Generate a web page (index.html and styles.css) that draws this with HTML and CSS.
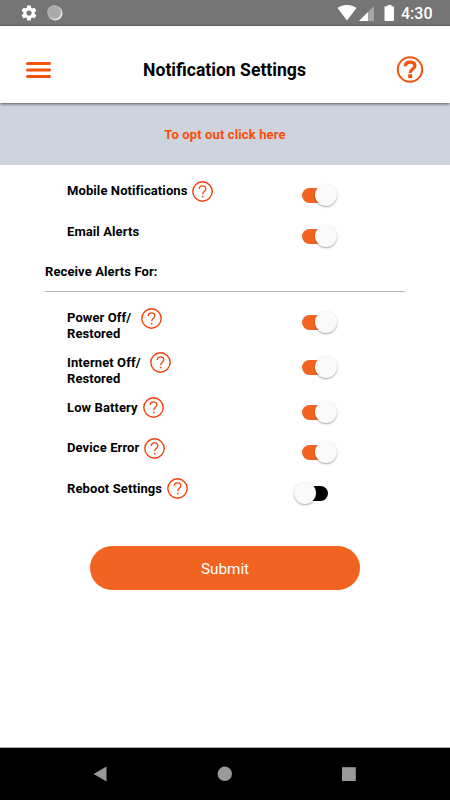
FILE: index.html
```html
<!DOCTYPE html>
<html lang="en">
<head>
    <meta charset="UTF-8">
    <meta name="viewport" content="width=device-width, initial-scale=1.0">
    <title>Notification Settings</title>
    <link rel="stylesheet" href="styles.css">
</head>
<body>
    <!-- Help icon shared by the setting rows -->
    <svg width="0" height="0" class="defs">
        <symbol id="help" viewBox="0 0 21 21">
            <circle cx="10.5" cy="10.5" r="9.7" fill="none" stroke="#f4410b" stroke-width="1.4"/>
            <path d="M7.2 8.1C7.2 6 8.600 4.900 10.500 4.900S13.800 6.100 13.800 7.900C13.800 10.100 10.700 10.400 10.700 13.200" fill="none" stroke="#f4410b" stroke-width="1.3"/>
            <rect x="9.9" y="14.8" width="1.6" height="1.500" fill="#f4410b"/>
        </symbol>
    </svg>

    <div class="screen">
        <div class="status-bar">
            <svg width="18" height="18" viewBox="0 0 24 24"><path fill="#fff" d="M19.43 12.98c.04-.32.07-.64.07-.98s-.03-.66-.07-.98l2.11-1.65c.19-.15.24-.42.12-.64l-2-3.46c-.12-.22-.39-.3-.61-.22l-2.49 1c-.52-.4-1.08-.73-1.69-.98l-.38-2.65C14.46 2.18 14.25 2 14 2h-4c-.25 0-.46.18-.49.42l-.38 2.65c-.61.25-1.17.59-1.69.98l-2.49-1c-.23-.09-.49 0-.61.22l-2 3.46c-.13.22-.07.49.12.64l2.11 1.65c-.04.32-.07.65-.07.98s.03.66.07.98l-2.11 1.65c-.19.15-.24.42-.12.64l2 3.46c.12.22.39.3.61.22l2.49-1c.52.4 1.08.73 1.69.98l.38 2.65c.03.24.24.42.49.42h4c.25 0 .46-.18.49-.42l.38-2.65c.61-.25 1.17-.59 1.69-.98l2.49 1c.23.09.49 0 .61-.22l2-3.46c.12-.22.07-.49-.12-.64l-2.11-1.65zM12 15.5c-1.93 0-3.5-1.57-3.5-3.5s1.57-3.5 3.5-3.5 3.5 1.57 3.5 3.5-1.57 3.5-3.5 3.5z"/></svg>
            <svg width="16" height="16" viewBox="0 0 16 16">
                <circle cx="8.2" cy="8.2" r="7.3" fill="#f2f2f2"/>
                <circle cx="7.3" cy="7.2" r="7" fill="#aaa"/>
                <circle cx="7.3" cy="7.2" r="6.3" fill="none" stroke="#c4c4c4" stroke-width="1" stroke-dasharray="1 1"/>
            </svg>
            <div class="status-right">
                <svg width="58" height="26" viewBox="0 0 58 26">
                    <path d="M0.500 8C5.500 4 14.500 4 19.500 8L10 20.500z" fill="#fff"/>
                    <path d="M37 6V21H22z" fill="#a5a5a5"/>
                    <path d="M31 12V21H22z" fill="#fff"/>
                    <path d="M48.500 6.300h2V5h4v1.300h1.700q.8 0 .8.800v13q0 .9-.9.900h-7.700q-.9 0-.9-.9v-13q0-.8 1-.8z" fill="#fff"/>
                </svg>
                <span class="time">4:30</span>
            </div>
        </div>

        <header class="header">
            <svg width="26" height="18" viewBox="0 0 26 18">
                <path d="M1.500 2.500h22M1.500 9h22M1.500 15.500h22" stroke="#f2530c" stroke-width="3" stroke-linecap="round"/>
            </svg>
            <h1>Notification Settings</h1>
            <svg width="28" height="28" viewBox="0 0 28 28">
                <circle cx="14" cy="13.500" r="12.200" fill="none" stroke="#f2530c" stroke-width="2"/>
                <path d="M9.300 10.300C9.300 7.600 11.300 6.200 14 6.200s4.900 1.300 4.900 3.700c0 3.200-4.700 3.200-4.700 7" fill="none" stroke="#f2530c" stroke-width="3.200"/>
                <rect x="12.200" y="18.200" width="4" height="3.800" fill="#f2530c"/>
            </svg>
        </header>

        <a class="banner">To opt out click here</a>

        <main class="settings">
            <div class="row">
                <span>Mobile Notifications</span>
                <svg class="help"><use href="#help"/></svg>
                <div class="switch on"></div>
            </div>
            <div class="row">
                <span>Email Alerts</span>
                <div class="switch on"></div>
            </div>
            <h2>Receive Alerts For:</h2>
            <div class="row tall">
                <span>Power Off/<br>Restored</span>
                <svg class="help"><use href="#help"/></svg>
                <div class="switch on"></div>
            </div>
            <div class="row tall">
                <span>Internet Off/<br>Restored</span>
                <svg class="help"><use href="#help"/></svg>
                <div class="switch on"></div>
            </div>
            <div class="row">
                <span>Low Battery</span>
                <svg class="help"><use href="#help"/></svg>
                <div class="switch on"></div>
            </div>
            <div class="row">
                <span>Device Error</span>
                <svg class="help"><use href="#help"/></svg>
                <div class="switch on"></div>
            </div>
            <div class="row">
                <span>Reboot Settings</span>
                <svg class="help"><use href="#help"/></svg>
                <div class="switch"></div>
            </div>
            <button class="submit">Submit</button>
        </main>

        <div class="nav-bar">
            <svg width="14" height="16" viewBox="0 0 14 16"><path d="M13.500 .5v15L.5 8z" fill="#999"/></svg>
            <svg width="16" height="16" viewBox="0 0 16 16"><circle cx="7.800" cy="7.800" r="7.200" fill="#999"/></svg>
            <svg width="14" height="16" viewBox="0 0 14 16"><rect y="1.200" width="13.800" height="13.800" fill="#999"/></svg>
        </div>
    </div>
</body>
</html>
```

FILE: styles.css
```css
* {
    box-sizing: border-box;
}

body {
    margin: 0;
    font-family: Roboto, sans-serif;
    background-color: #fff;
    color: #000;
}

svg {
    display: block;
    flex-shrink: 0;
}

.defs {
    position: absolute;
}

.screen {
    width: 450px;
    height: 800px;
    display: flex;
    flex-direction: column;
    overflow: hidden;
}

/* Android status bar */
.status-bar {
    height: 26px;
    background-color: #757575;
    border-bottom: 1px solid #656565;
    display: flex;
    align-items: center;
    gap: 9px;
    padding: 0 17.5px 0 19.5px;
}

.status-right {
    margin-left: auto;
    display: flex;
    align-items: center;
    gap: 6.5px;
}

.time {
    color: #fff;
    font-size: 16px;
    font-weight: 500;
    line-height: 26px;
    padding-top: 2px;
}

/* Title bar */
.header {
    position: relative;
    height: 77px;
    padding: 10px 26px 0;
    background-color: #fff;
    box-shadow: 0 1px 3px rgba(0, 0, 0, 0.6);
    display: flex;
    align-items: center;
    justify-content: space-between;
}

h1 {
    margin: 0;
    padding-left: 1px;
    font-size: 17.6px;
    font-weight: 700;
}

.banner {
    height: 61.5px;
    background-color: #ced3dc;
    color: #fb4d0c;
    font-size: 13px;
    font-weight: 700;
    line-height: 63px;
    letter-spacing: 0.13px;
    text-align: center;
}

/* List of settings */
.settings {
    flex: 1;
    padding: 16px 45px 0;
    display: flex;
    flex-direction: column;
}

.row {
    height: 40.7px;
    padding: 0 68px 0 22px;
    display: flex;
    align-items: flex-start;
    font-size: 13px;
    font-weight: 700;
    line-height: 16px;
    letter-spacing: 0.1px;
}

.row span {
    padding-top: 2.5px;
}

.row.tall {
    height: 44.6px;
}

.help {
    width: 21px;
    height: 21px;
    margin-left: 5px;
}

.tall .help {
    margin-left: 9.5px;
}

h2 {
    height: 30px;
    margin: 0 0 16px;
    padding-top: 2px;
    border-bottom: 1px solid #b3b8bd;
    font-size: 13px;
    font-weight: 700;
    line-height: 16px;
    letter-spacing: 0.1px;
}

/* Toggle switch */
.switch {
    width: 26px;
    height: 15px;
    margin: 7.5px 9px 0 auto;
    border-radius: 8px;
    background-color: #000;
}

.switch::before {
    content: "";
    display: block;
    width: 22px;
    height: 22px;
    margin: -4px 0 0 -8px;
    border-radius: 50%;
    background-color: #fafafa;
    box-shadow: 0 1px 2px rgba(0, 0, 0, 0.35);
}

.switch.on {
    background-color: #f26322;
}

.switch.on::before {
    margin-left: 12.5px;
}

.submit {
    width: 270px;
    height: 44px;
    margin: 27px auto 0;
    padding: 2px 0 0;
    border: none;
    border-radius: 22px;
    background-color: #f26322;
    color: #fff;
    font-family: inherit;
    font-size: 15.3px;
}

/* Android navigation bar */
.nav-bar {
    height: 53px;
    padding: 0 94px 0 93px;
    background-color: #000;
    border-top: 1px solid #aaa;
    display: flex;
    align-items: center;
    justify-content: space-between;
}
```
